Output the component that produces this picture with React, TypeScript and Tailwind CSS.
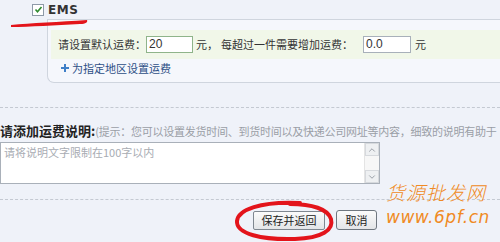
import { ChevronUp, ChevronDown } from 'lucide-react';

const font = { fontFamily: '"Noto Sans CJK SC", "Liberation Sans", sans-serif' };

export default function App() {
  return (
    <div
      className="relative w-[500px] h-[242px] overflow-hidden bg-[#eff2f9] text-[#333]"
      style={font}
    >
      {/* EMS header */}
      <div className="h-[19px] flex items-center pl-[32px] gap-[4px]">
        <span className="w-[12px] h-[12px] border border-[#8e9aa8] bg-white flex items-center justify-center">
          <svg width="9" height="9" viewBox="0 0 9 9">
            <path d="M1.5 4.5 L3.5 6.8 L7.5 2" fill="none" stroke="#2f8a2f" strokeWidth="1.6" />
          </svg>
        </span>
        <span className="text-[12px] font-bold leading-none tracking-[0.5px]" style={{ fontFamily: '"DejaVu Sans", sans-serif' }}>
          EMS
        </span>
      </div>

      {/* settings box */}
      <div className="ml-[47px] h-[64px] border-t border-l border-b border-[#cfd5de] rounded-bl-[7px] bg-[#f5f7fc] pt-[10px] pl-[3px]">
        <div className="h-[29px] bg-[#f1f7e9] flex items-center pl-[7px] text-[11px] whitespace-nowrap">
          <span>请设置默认运费：</span>
          <div className="w-[47px] h-[17px] border border-[#8fb48a] bg-white text-[12px] leading-[15px] pl-[2px]" style={{ fontFamily: '"Liberation Sans", sans-serif' }}>
            20
          </div>
          <span className="ml-[3px]">元，</span>
          <span className="ml-[3px]">每超过一件需要增加运费：</span>
          <div className="w-[48px] h-[17px] border border-[#a8b0ba] bg-white ml-[10px] text-[12px] leading-[15px] pl-[2px]" style={{ fontFamily: '"Liberation Sans", sans-serif' }}>
            0.0
          </div>
          <span className="ml-[4px]">元</span>
        </div>
        <div className="mt-[2px] h-[14px] flex items-center pl-[10px] gap-[3px] text-[11px] text-[#2d4f86]">
          <svg width="8" height="8" viewBox="0 0 8 8">
            <path d="M3 0 H5 V3 H8 V5 H5 V8 H3 V5 H0 V3 H3 Z" fill="#3f7fc8" />
          </svg>
          <span>为指定地区设置运费</span>
        </div>
      </div>

      {/* divider */}
      <div className="mt-[24px] border-t border-dashed border-[#c4c9d2]" />

      {/* description */}
      <div className="mt-[14px] h-[17px] flex items-baseline whitespace-nowrap">
        <span className="text-[13px] font-bold leading-[17px] text-[#222] shrink-0">请添加运费说明:</span>
        <span className="text-[11px] leading-[17px] tracking-[-0.25px] text-[#9a9ea6]">(提示：您可以设置发货时间、到货时间以及快递公司网址等内容，细致的说明有助于</span>
      </div>
      <div className="mt-[3px] w-[380px] h-[42px] border border-[#a9b0b9] bg-white flex">
        <div className="flex-1 pl-[3px] pt-[2px] text-[11px] leading-[14px] text-[#a8acb3]">
          请将说明文字限制在100字以内
        </div>
        <div className="w-[15px] flex flex-col justify-between bg-[#f7f7f7] border-l border-[#e4e4e4]">
          <div className="h-[13px] border border-[#d6d9dd] bg-[#eef0f2] flex items-center justify-center">
            <ChevronUp size={10} color="#8a9099" />
          </div>
          <div className="h-[13px] border border-[#d6d9dd] bg-[#eef0f2] flex items-center justify-center">
            <ChevronDown size={10} color="#8a9099" />
          </div>
        </div>
      </div>

      {/* divider */}
      <div className="mt-[15px] border-t border-dashed border-[#c4c9d2]" />

      {/* buttons */}
      <div className="mt-[10px] flex items-center pl-[253px] gap-[11px]">
        <button className="w-[72px] h-[19px] border border-[#7f8790] rounded-[2px] bg-gradient-to-b from-[#fbfbfb] to-[#e3e5e8] text-[11px] leading-none text-[#222]">
          保存并返回
        </button>
        <button className="w-[41px] h-[20px] border border-[#6f7780] rounded-[3px] bg-gradient-to-b from-[#fbfbfb] to-[#e3e5e8] text-[11px] leading-none text-[#222]">
          取消
        </button>
      </div>

      {/* red annotations */}
      <svg className="absolute left-0 top-0" width="500" height="242" viewBox="0 0 500 242">
        <path d="M11 25 C30 23, 60 22, 87 20 C88 22, 86 24, 80 24 C55 25, 30 27, 11 27 Z" fill="#e3141b" />
        <path
          d="M300 203 C260 201, 238 210, 237 221 C236 234, 262 240, 295 239 C322 238, 334 230, 331 219 C328 209, 312 204, 290 204"
          fill="none"
          stroke="#e3141b"
          strokeWidth="4"
          strokeLinecap="round"
        />
      </svg>

      {/* watermark */}
      <div
        className="absolute left-[386px] top-[180px] flex flex-col text-[#f08a24] italic font-light"
        style={{ fontFamily: '"Noto Sans CJK SC", sans-serif' }}
      >
        <span className="text-[19px] leading-[24px] tracking-[1px]">货源批发网</span>
        <span className="text-[17px] leading-[22px] mt-[2px] tracking-[0.5px]" style={{ fontFamily: '"DejaVu Sans", sans-serif' }}>
          www.6pf.cn
        </span>
      </div>
    </div>
  );
}
